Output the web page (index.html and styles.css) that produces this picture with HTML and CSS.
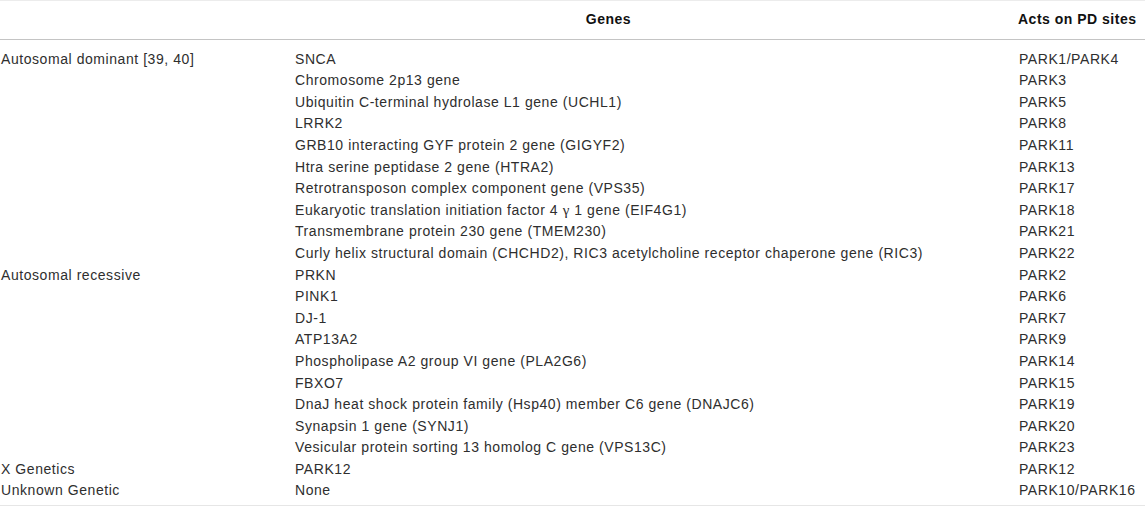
FILE: index.html
```html
<!DOCTYPE html>
<html lang="en">
<head>
<meta charset="utf-8">
<title>PD genes</title>
<link rel="stylesheet" href="styles.css">
</head>
<body>
<div class="tbl">
  <div class="hd"></div>
  <div class="hd genes">Genes</div>
  <div class="hd">Acts on PD sites</div>

  <div class="body">
    <div class="c1">Autosomal dominant [39, 40]</div><div class="c2">SNCA</div><div class="c3">PARK1/PARK4</div>
    <div class="c1"></div><div class="c2">Chromosome 2p13 gene</div><div class="c3">PARK3</div>
    <div class="c1"></div><div class="c2">Ubiquitin C-terminal hydrolase L1 gene (UCHL1)</div><div class="c3">PARK5</div>
    <div class="c1"></div><div class="c2">LRRK2</div><div class="c3">PARK8</div>
    <div class="c1"></div><div class="c2">GRB10 interacting GYF protein 2 gene (GIGYF2)</div><div class="c3">PARK11</div>
    <div class="c1"></div><div class="c2">Htra serine peptidase 2 gene (HTRA2)</div><div class="c3">PARK13</div>
    <div class="c1"></div><div class="c2">Retrotransposon complex component gene (VPS35)</div><div class="c3">PARK17</div>
    <div class="c1"></div><div class="c2">Eukaryotic translation initiation factor 4 <span class="greek">γ</span> 1 gene (EIF4G1)</div><div class="c3">PARK18</div>
    <div class="c1"></div><div class="c2">Transmembrane protein 230 gene (TMEM230)</div><div class="c3">PARK21</div>
    <div class="c1"></div><div class="c2">Curly helix structural domain (CHCHD2), RIC3 acetylcholine receptor chaperone gene (RIC3)</div><div class="c3">PARK22</div>
    <div class="c1">Autosomal recessive</div><div class="c2">PRKN</div><div class="c3">PARK2</div>
    <div class="c1"></div><div class="c2">PINK1</div><div class="c3">PARK6</div>
    <div class="c1"></div><div class="c2">DJ-1</div><div class="c3">PARK7</div>
    <div class="c1"></div><div class="c2">ATP13A2</div><div class="c3">PARK9</div>
    <div class="c1"></div><div class="c2">Phospholipase A2 group VI gene (PLA2G6)</div><div class="c3">PARK14</div>
    <div class="c1"></div><div class="c2">FBXO7</div><div class="c3">PARK15</div>
    <div class="c1"></div><div class="c2">DnaJ heat shock protein family (Hsp40) member C6 gene (DNAJC6)</div><div class="c3">PARK19</div>
    <div class="c1"></div><div class="c2">Synapsin 1 gene (SYNJ1)</div><div class="c3">PARK20</div>
    <div class="c1"></div><div class="c2">Vesicular protein sorting 13 homolog C gene (VPS13C)</div><div class="c3">PARK23</div>
    <div class="c1">X Genetics</div><div class="c2">PARK12</div><div class="c3">PARK12</div>
    <div class="c1">Unknown Genetic</div><div class="c2">None</div><div class="c3">PARK10/PARK16</div>
  </div>
</div>
</body>
</html>
```

FILE: styles.css
```css
html, body {
  margin: 0;
  padding: 0;
  background: #ffffff;
}

.tbl {
  display: grid;
  grid-template-columns: 295px 723px 1fr;
  width: 1145px;
  font-family: "Liberation Sans", Arial, sans-serif;
  font-size: 14px;
  line-height: 21.6px;
  letter-spacing: 0.56px;
  color: #2e2e2e;
  border-top: 1px solid #ececec;
  border-bottom: 1px solid #e6e6e6;
  box-sizing: border-box;
}

.hd {
  font-weight: bold;
  letter-spacing: 0.5px;
  color: #111111;
  padding: 8px 0 8px 0;
  border-bottom: 1.5px solid #c4c4c4;
  white-space: nowrap;
}

.genes {
  text-align: center;
  padding-right: 96px;
}

.body {
  grid-column: 1 / -1;
  display: grid;
  grid-template-columns: 295px 723px 1fr;
  padding: 9px 0 3px 0;
}

.c1 {
  padding-left: 1px;
  white-space: nowrap;
}

.c2, .c3 {
  white-space: nowrap;
}

.c3 {
  padding-left: 1px;
}

.greek {
  font-family: "Liberation Serif", "DejaVu Serif", serif;
  font-size: 15px;
}
```
